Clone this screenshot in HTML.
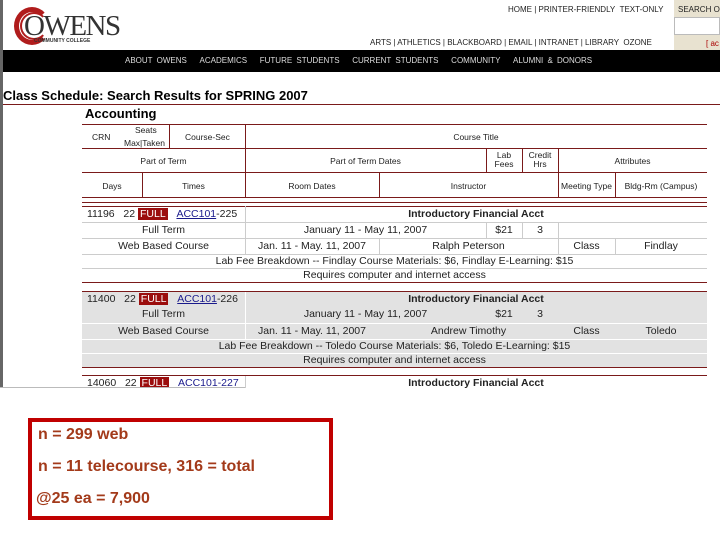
<!DOCTYPE html>
<html><head><meta charset="utf-8"><style>
*{margin:0;padding:0;box-sizing:border-box}
body{width:720px;height:540px;background:#fff;position:relative;overflow:hidden;font-family:"Liberation Sans",Arial,sans-serif;color:#000}
.a{position:absolute;white-space:nowrap}
.s{font-size:8.5px;color:#222}
.n{font-size:8px;color:#222}
.t{font-size:10.5px;color:#222}
.c{text-align:center}
.hl{position:absolute;height:1px;background:#7a1a1a}
.gl{position:absolute;height:1px;background:#ccc}
.vl{position:absolute;width:1px;background:#7a1a1a}
.vg{position:absolute;width:1px;background:#ccc}
.full{background:#9b0d0d;color:#fff;padding:0 2px}
.lnk{color:#1a1a8c;text-decoration:underline}
</style></head><body>
<div class="a" style="left:0;top:0;width:3px;height:388px;background:#666"></div>
<!-- logo -->
<div class="a" style="left:14px;top:7px;width:36px;height:38px;border:5px solid #b01c1c;border-right-color:transparent;border-radius:50%"></div>
<div class="a" style="left:20px;top:12px;width:28px;height:28px;border:2px solid #b01c1c;border-right-color:transparent;border-radius:50%"></div>
<div class="a" style="left:24px;top:10px;font-family:'Liberation Serif',serif;font-size:29px;color:#333;letter-spacing:-1.5px">OWENS</div>
<div class="a" style="left:34px;top:38px;font-size:5px;color:#333;font-weight:bold">COMMUNITY COLLEGE</div>
<!-- top links -->
<div class="a n" style="left:508px;top:5px">HOME | PRINTER-FRIENDLY &nbsp;TEXT-ONLY</div>
<div class="a" style="left:674px;top:0;width:46px;height:50px;background:#e8e2d0"></div>
<div class="a n" style="left:678px;top:5px">SEARCH O</div>
<div class="a" style="left:674px;top:17px;width:46px;height:18px;background:#fff;border:1px solid #bbb"></div>
<div class="a n" style="left:706px;top:39px;color:#a00">[ ac</div>
<div class="a n" style="left:370px;top:38px">ARTS | ATHLETICS | BLACKBOARD | EMAIL | INTRANET | LIBRARY &nbsp;OZONE</div>
<!-- black nav -->
<div class="a" style="left:3px;top:50px;width:717px;height:22px;background:#000"></div>
<div class="a n" style="left:125px;top:56px;color:#ddd;word-spacing:2px">ABOUT OWENS &nbsp;&nbsp;ACADEMICS &nbsp;&nbsp;FUTURE STUDENTS &nbsp;&nbsp;CURRENT STUDENTS &nbsp;&nbsp;COMMUNITY &nbsp;&nbsp;ALUMNI &amp; DONORS</div>
<!-- title -->
<div class="a" style="left:3px;top:88px;font-size:13px;font-weight:bold">Class Schedule: Search Results for SPRING 2007</div>
<div class="hl" style="left:3px;top:104px;width:717px"></div>
<div class="a" style="left:85px;top:106px;font-size:13px;font-weight:bold">Accounting</div>
<!-- header grid -->
<div class="hl" style="left:82px;top:124px;width:625px"></div>
<div class="hl" style="left:82px;top:148px;width:625px"></div>
<div class="hl" style="left:82px;top:172px;width:625px"></div>
<div class="hl" style="left:82px;top:197px;width:625px"></div>
<div class="hl" style="left:82px;top:202px;width:625px"></div>
<div class="vl" style="left:169px;top:124px;height:24px"></div>
<div class="vl" style="left:245px;top:124px;height:73px"></div>
<div class="vl" style="left:142px;top:172px;height:25px"></div>
<div class="vl" style="left:379px;top:172px;height:25px"></div>
<div class="vl" style="left:486px;top:148px;height:24px"></div>
<div class="vl" style="left:522px;top:148px;height:24px"></div>
<div class="vl" style="left:558px;top:148px;height:49px"></div>
<div class="vl" style="left:615px;top:172px;height:25px"></div>
<div class="a s" style="left:92px;top:132px">CRN</div>
<div class="a s" style="left:135px;top:125px">Seats</div>
<div class="a s" style="left:124px;top:138px">Max|Taken</div>
<div class="a s" style="left:185px;top:132px">Course-Sec</div>
<div class="a s c" style="left:245px;width:462px;top:132px">Course Title</div>
<div class="a s c" style="left:82px;width:163px;top:156px">Part of Term</div>
<div class="a s c" style="left:245px;width:241px;top:156px">Part of Term Dates</div>
<div class="a s c" style="left:486px;width:36px;top:151px;line-height:9px">Lab<br>Fees</div>
<div class="a s c" style="left:522px;width:36px;top:151px;line-height:9px">Credit<br>Hrs</div>
<div class="a s c" style="left:558px;width:149px;top:156px">Attributes</div>
<div class="a s c" style="left:82px;width:60px;top:181px">Days</div>
<div class="a s c" style="left:142px;width:103px;top:181px">Times</div>
<div class="a s c" style="left:245px;width:134px;top:181px">Room Dates</div>
<div class="a s c" style="left:379px;width:179px;top:181px">Instructor</div>
<div class="a s c" style="left:558px;width:57px;top:181px">Meeting Type</div>
<div class="a s c" style="left:615px;width:92px;top:181px">Bldg-Rm (Campus)</div>
<!-- record 1 -->
<div class="hl" style="left:82px;top:206px;width:625px"></div>
<div class="a t" style="left:87px;top:208px">11196 &nbsp;&nbsp;22 <span class="full">FULL</span> &nbsp;&nbsp;<span class="lnk">ACC101</span>-225</div>
<div class="a c" style="left:245px;width:462px;top:208px;font-size:10.5px;font-weight:bold;color:#222">Introductory Financial Acct</div>
<div class="gl" style="left:82px;top:222px;width:625px"></div>
<div class="vg" style="left:245px;top:206px;height:48px"></div>
<div class="a t c" style="left:82px;width:163px;top:224px">Full Term</div>
<div class="a t c" style="left:245px;width:241px;top:224px">January 11 - May 11, 2007</div>
<div class="a t c" style="left:486px;width:36px;top:224px">$21</div>
<div class="a t c" style="left:522px;width:36px;top:224px">3</div>
<div class="vg" style="left:486px;top:222px;height:16px"></div><div class="vg" style="left:522px;top:222px;height:16px"></div><div class="vg" style="left:558px;top:222px;height:32px"></div>
<div class="gl" style="left:82px;top:238px;width:625px"></div>
<div class="a t c" style="left:82px;width:163px;top:240px">Web Based Course</div>
<div class="a t c" style="left:245px;width:134px;top:240px">Jan. 11 - May. 11, 2007</div>
<div class="a t c" style="left:379px;width:179px;top:240px">Ralph Peterson</div>
<div class="a t c" style="left:558px;width:57px;top:240px">Class</div>
<div class="a t c" style="left:615px;width:92px;top:240px">Findlay</div>
<div class="vg" style="left:379px;top:238px;height:16px"></div><div class="vg" style="left:615px;top:238px;height:16px"></div>
<div class="gl" style="left:82px;top:254px;width:625px"></div>
<div class="a t c" style="left:82px;width:625px;top:255px">Lab Fee Breakdown -- Findlay Course Materials: $6, Findlay E-Learning: $15</div>
<div class="gl" style="left:82px;top:268px;width:625px"></div>
<div class="a t c" style="left:82px;width:625px;top:269px">Requires computer and internet access</div>
<div class="hl" style="left:82px;top:282px;width:625px"></div>
<!-- record 2 -->
<div class="a" style="left:82px;top:292px;width:625px;height:75px;background:#e2e2e2"></div>
<div class="hl" style="left:82px;top:291px;width:625px"></div>
<div class="a t" style="left:87px;top:293px">11400 &nbsp;&nbsp;22 <span class="full">FULL</span> &nbsp;&nbsp;<span class="lnk">ACC101</span>-226</div>
<div class="a c" style="left:245px;width:462px;top:293px;font-size:10.5px;font-weight:bold;color:#222">Introductory Financial Acct</div>
<div class="vg" style="left:245px;top:292px;height:48px;background:#fff"></div>
<div class="a t c" style="left:82px;width:163px;top:308px">Full Term</div>
<div class="a t c" style="left:245px;width:241px;top:308px">January 11 - May 11, 2007</div>
<div class="a t c" style="left:486px;width:36px;top:308px">$21</div>
<div class="a t c" style="left:522px;width:36px;top:308px">3</div>
<div class="gl" style="left:82px;top:323px;width:625px;background:#fff"></div>
<div class="a t c" style="left:82px;width:163px;top:325px">Web Based Course</div>
<div class="a t c" style="left:245px;width:134px;top:325px">Jan. 11 - May. 11, 2007</div>
<div class="a t c" style="left:379px;width:179px;top:325px">Andrew Timothy</div>
<div class="a t c" style="left:558px;width:57px;top:325px">Class</div>
<div class="a t c" style="left:615px;width:92px;top:325px">Toledo</div>
<div class="gl" style="left:82px;top:339px;width:625px;background:#fff"></div>
<div class="a t c" style="left:82px;width:625px;top:340px">Lab Fee Breakdown -- Toledo Course Materials: $6, Toledo E-Learning: $15</div>
<div class="gl" style="left:82px;top:353px;width:625px;background:#fff"></div>
<div class="a t c" style="left:82px;width:625px;top:354px">Requires computer and internet access</div>
<div class="hl" style="left:82px;top:367px;width:625px"></div>
<!-- record 3 -->
<div class="hl" style="left:82px;top:375px;width:625px"></div>
<div class="a t" style="left:87px;top:377px">14060 &nbsp;&nbsp;22 <span class="full">FULL</span> &nbsp;&nbsp;<span style="color:#1a1a8c">ACC101-227</span></div>
<div class="a c" style="left:245px;width:462px;top:377px;font-size:10.5px;font-weight:bold;color:#222">Introductory Financial Acct</div>
<div class="vg" style="left:245px;top:376px;height:12px"></div>
<div class="a" style="left:0;top:387px;width:245px;height:1px;background:#bbb"></div>
<div class="a" style="left:0;top:388px;width:720px;height:152px;background:#fff"></div>
<!-- red box -->
<div class="a" style="left:28px;top:418px;width:305px;height:102px;border:4px solid #c00000"></div>
<div class="a" style="left:38px;top:426px;font-size:16px;font-weight:bold;color:#a33a1a">n = 299 web</div>
<div class="a" style="left:38px;top:458px;font-size:16px;font-weight:bold;color:#a33a1a">n = 11 telecourse, 316 = total</div>
<div class="a" style="left:36px;top:490px;font-size:16px;font-weight:bold;color:#a33a1a">@25 ea = 7,900</div>
</body></html>
